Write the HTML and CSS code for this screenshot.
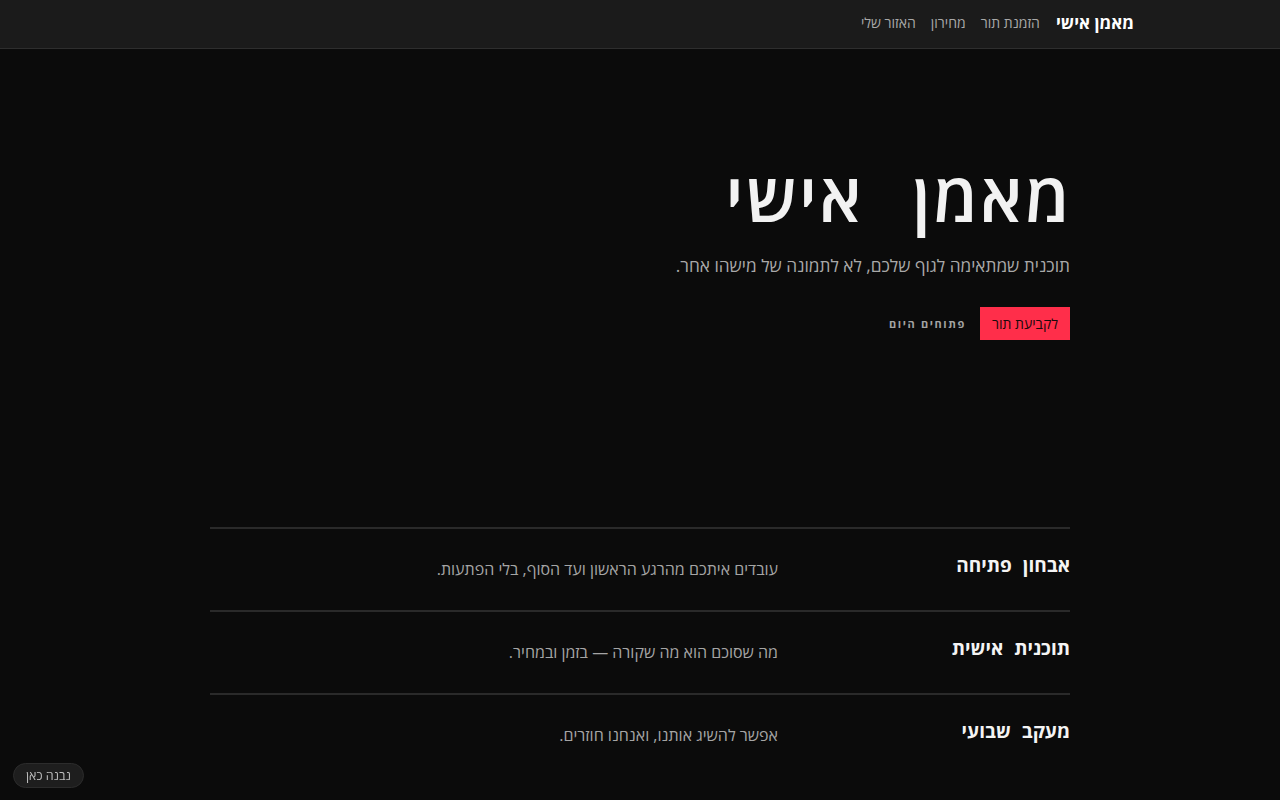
FILE: index.html
```html
<!DOCTYPE html>
<html lang="he" dir="rtl">
<head>
<meta charset="utf-8">
<title>מאמן אישי</title>
<link rel="stylesheet" href="styles.css">
</head>
<body>
<header class="nav">
  <div class="nav-inner">
    <a class="brand" href="#">מאמן אישי</a>
    <nav class="links">
      <a href="#">הזמנת תור</a>
      <a href="#">מחירון</a>
      <a href="#">האזור שלי</a>
    </nav>
  </div>
</header>
<main class="wrap">
  <section class="hero">
    <h1 class="title">מאמן אישי</h1>
    <p class="lead">תוכנית שמתאימה לגוף שלכם, לא לתמונה של מישהו אחר.</p>
    <div class="actions">
      <a class="btn-primary" href="#">לקביעת תור</a>
      <span class="note">פתוחים היום</span>
    </div>
  </section>
  <section class="rows">
    <div class="row">
      <h3 class="row-title">אבחון פתיחה</h3>
      <p class="row-text">עובדים איתכם מהרגע הראשון ועד הסוף, בלי הפתעות.</p>
    </div>
    <div class="row">
      <h3 class="row-title">תוכנית אישית</h3>
      <p class="row-text">מה שסוכם הוא מה שקורה — בזמן ובמחיר.</p>
    </div>
    <div class="row">
      <h3 class="row-title">מעקב שבועי</h3>
      <p class="row-text">אפשר להשיג אותנו, ואנחנו חוזרים.</p>
    </div>
  </section>
</main>
<div class="badge">נבנה כאן</div>
</body>
</html>
```
FILE: styles.css
```css
* { box-sizing: border-box; }
html, body { margin: 0; padding: 0; }
body {
  background: #0b0b0b;
  color: #f2f2f2;
  font-family: "Open Sans", "Noto Sans", sans-serif;
  min-height: 800px;
}
a { text-decoration: none; color: inherit; }
.nav {
  height: 49px;
  background: #1b1b1b;
  border-bottom: 1px solid #2e2e2e;
}
.nav-inner {
  max-width: 1000px;
  margin: 0 auto;
  height: 48px;
  display: flex;
  align-items: center;
  gap: 16px;
  padding: 0 6px 4px;
}
.brand {
  font-weight: 700;
  font-size: 17px;
  color: #ffffff;
}
.links {
  display: flex;
  gap: 15px;
  font-size: 14px;
  color: #a8a8a8;
}
.wrap {
  width: 860px;
  margin: 0 auto;
}
.hero {
  padding-top: 106px;
  height: 478px;
}
.title {
  margin: 0 -2px 0 0;
  font-size: 68px;
  font-weight: 600;
  line-height: 1.2;
  letter-spacing: 2.5px;
  word-spacing: 28px;
  color: #f2f2f2;
}
.lead {
  margin: 17px 0 0;
  font-size: 17.25px;
  color: #a9a9a9;
}
.actions {
  margin-top: 30px;
  display: flex;
  align-items: center;
  gap: 14px;
}
.btn-primary {
  background: #ff2e4a;
  color: #1a0a0c;
  font-size: 14px;
  height: 33px;
  padding: 0 12px;
  display: flex;
  align-items: center;
}
.note {
  font-size: 11px;
  font-weight: 700;
  letter-spacing: 1.6px;
  color: #a3a3a3;
}
.rows { border-top: 2px solid #2a2a2a; }
.row {
  display: grid;
  grid-template-columns: 260px 1fr;
  gap: 32px;
  align-items: start;
  height: 83px;
  padding-top: 23px;
  border-bottom: 2px solid #2a2a2a;
}
.row:last-child { border-bottom: 0; }
.row-title {
  margin: 0;
  font-size: 19px;
  font-weight: 700;
  word-spacing: 6px;
  color: #f4f4f4;
}
.row-text {
  margin: 6px 0 0;
  font-size: 16px;
  color: #a5a5a5;
}
.badge {
  position: fixed;
  left: 13px;
  bottom: 12px;
  height: 25px;
  padding: 0 12px;
  display: flex;
  align-items: center;
  background: #1e1e1e;
  border: 1px solid #2c2c2c;
  border-radius: 13px;
  font-size: 12.5px;
  color: #bdbdbd;
}
```
